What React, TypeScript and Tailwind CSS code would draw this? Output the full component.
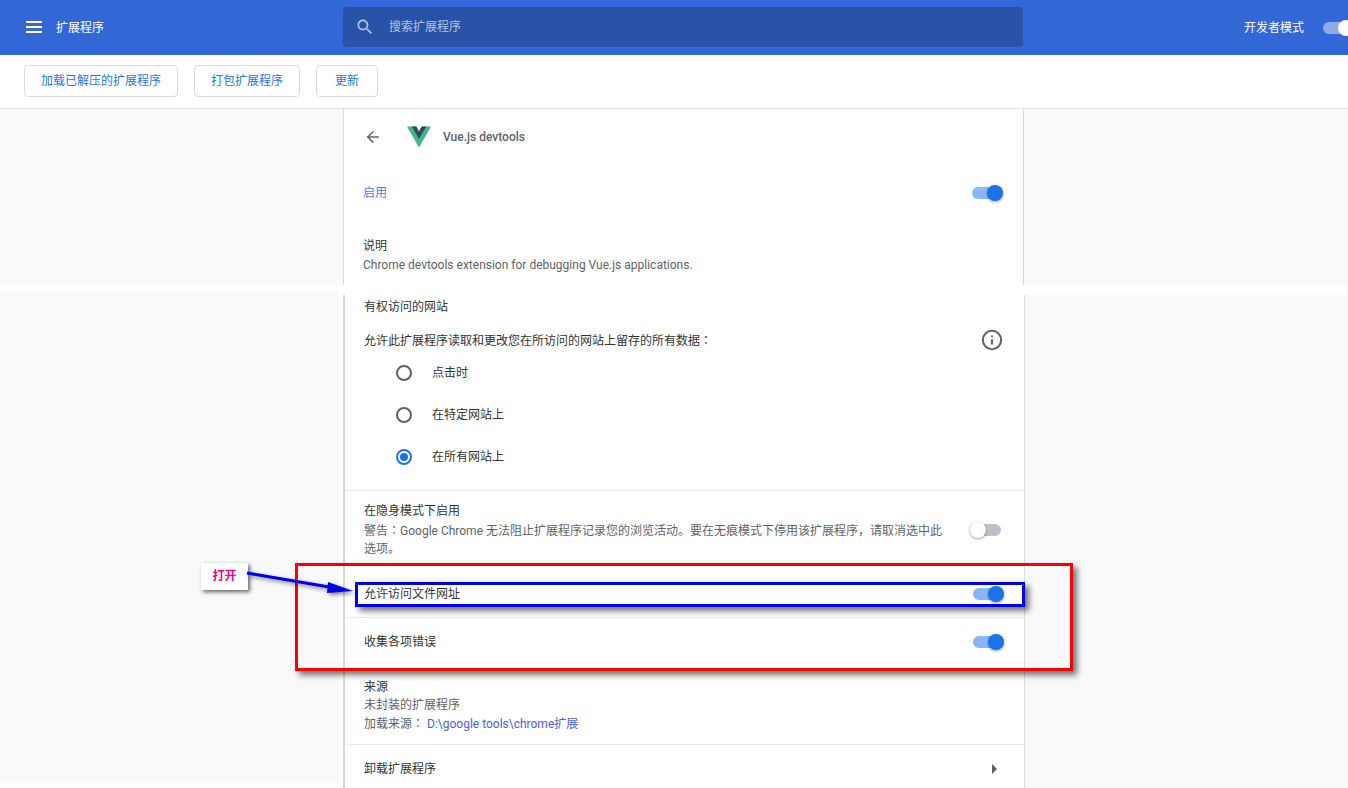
import { ArrowLeft, Info } from "lucide-react"

const cjk = "font-['Roboto','Noto_Sans_CJK_SC',sans-serif]"

function Toggle({ on = true, white = false }: { on?: boolean; white?: boolean }) {
  if (white) {
    return (
      <div className="relative h-3 w-[31px] rounded-full bg-[#8fabe4]">
        <div className="absolute right-0 top-[-2px] h-4 w-4 rounded-full bg-white" />
      </div>
    )
  }
  return (
    <div className={`relative h-3 w-[31px] rounded-full ${on ? "bg-[#8ab8f6]" : "bg-[#bdc1c6]"}`}>
      <div
        className={`absolute top-[-2px] h-4 w-4 rounded-full shadow-[0_1px_3px_rgba(0,0,0,0.4)] ${
          on ? "right-0 bg-[#1a73e8]" : "left-0 bg-white"
        }`}
      />
    </div>
  )
}

function Radio({ label, checked = false }: { label: string; checked?: boolean }) {
  return (
    <div className="flex h-[42px] items-center pl-[51px]">
      <div
        className={`flex h-4 w-4 items-center justify-center rounded-full border-2 ${
          checked ? "border-[#1a73e8]" : "border-[#5f6368]"
        }`}
      >
        {checked && <div className="h-2 w-2 rounded-full bg-[#1a73e8]" />}
      </div>
      <span className="ml-5 text-xs text-[#333]">{label}</span>
    </div>
  )
}

// the full-width colon sits in the middle of its cell in the picture
function Colon() {
  return <span className="font-['Noto_Sans_CJK_TC',sans-serif]">：</span>
}

export default function App() {
  return (
    <div className={`relative h-[788px] w-[1348px] overflow-hidden bg-white ${cjk}`}>
      {/* Header */}
      <header className="flex h-[55px] items-center bg-[#3367d6]">
        <div className="flex w-[343px] items-center pl-[26px]">
          <svg className="mb-px h-3 w-4" viewBox="0 0 16 12" fill="#fff">
            <rect width="16" height="2" />
            <rect y="5" width="16" height="2" />
            <rect y="10" width="16" height="2" />
          </svg>
          <span className="ml-[14px] text-xs text-white">扩展程序</span>
        </div>
        <div className="mb-px flex h-10 w-[680px] items-center rounded-sm bg-[#2a52a6] pl-3">
          <svg className="h-5 w-5" viewBox="0 0 24 24" fill="#b4c3e4">
            <path d="M15.5 14h-.79l-.28-.27C15.41 12.59 16 11.11 16 9.5 16 5.91 13.09 3 9.5 3S3 5.91 3 9.5 5.91 16 9.5 16c1.61 0 3.09-.59 4.23-1.57l.27.28v.79l5 4.99L20.49 19l-4.99-5zm-6 0C7.01 14 5 11.99 5 9.5S7.01 5 9.5 5 14 7.01 14 9.5 11.99 14 9.5 14z" />
          </svg>
          <span className="ml-[14px] text-xs text-[#b4c3e4]">搜索扩展程序</span>
        </div>
        <div className="ml-auto flex items-center gap-[19px]">
          <span className="text-xs text-white">开发者模式</span>
          <div className="w-[25px] overflow-hidden py-1">
            <Toggle white />
          </div>
        </div>
      </header>

      {/* Toolbar */}
      <div className="flex h-[54px] items-center gap-4 border-b border-[#e0e0e0] pb-px pl-6">
        <button className="h-8 w-[154px] rounded border border-[#dadce0] text-xs text-[#2a74e8]">加载已解压的扩展程序</button>
        <button className="h-8 w-[106px] rounded border border-[#dadce0] text-xs text-[#2a74e8]">打包扩展程序</button>
        <button className="h-8 w-[62px] rounded border border-[#dadce0] text-xs text-[#2a74e8]">更新</button>
      </div>

      {/* First part of the page */}
      <div className="flex h-[176px] bg-[#f8f9fa]">
        <div className="w-[343px]" />
        <main className="w-[681px] border-x border-[#d9d9d9] bg-white pl-[19px] pr-5">
          <div className="flex h-[56px] items-center">
            <ArrowLeft className="ml-[1px] h-[18px] w-[18px] text-[#5f6368]" strokeWidth={2} />
            <svg className="ml-[25px] h-[22px] w-6" viewBox="0 0 261.76 226.69">
              <path fill="#41b883" d="M161.096.001l-30.225 52.351L100.647.001H-.005l130.877 226.688L261.749.001z" />
              <path fill="#34495e" d="M161.096.001l-30.225 52.351L100.647.001H52.346l78.526 136.01L209.398.001z" />
            </svg>
            <span className="ml-3 text-xs font-medium text-[#5f6368]">Vue.js devtools</span>
          </div>
          <div className="flex h-[56px] items-center justify-between">
            <span className="text-xs text-[#3f7fef]">启用</span>
            <Toggle />
          </div>
          <div className="pt-4 text-xs leading-[19px]">
            <div className="text-[#333]">说明</div>
            <div className="text-[#5f6368]">Chrome devtools extension for debugging Vue.js applications.</div>
          </div>
        </main>
        <div className="flex-1" />
      </div>

      <div className="flex h-[6px] justify-end">
        <div className="w-[2px] bg-[#f8f9fa]" />
      </div>

      {/* Second part of the page, a screenshot seam sits above it */}
      <div className="flex h-[497px]">
        <div className="h-[492px] w-[339px] bg-[#f8f9fa]" />
        <section className="ml-1 mt-1 w-[682px] border-r border-l-2 border-[#d9d9d9] bg-white">
          <div className="h-[196px] border-b border-[#ebebeb]">
            <div className="pl-[19px] pr-[21px] pt-1 text-xs leading-4 text-[#333]">有权访问的网站</div>
            <div className="flex items-center justify-between pl-[19px] pr-[21px] pt-[14px] text-xs text-[#333]">
              <span>允许此扩展程序读取和更改您在所访问的网站上留存的所有数据<Colon /></span>
              <Info className="h-[22px] w-[22px] text-[#5f6368]" strokeWidth={2.2} />
            </div>
            <div className="pt-px">
              <Radio label="点击时" />
              <Radio label="在特定网站上" />
              <Radio label="在所有网站上" checked />
            </div>
          </div>
          <div className="flex h-[79px] items-center justify-between pl-[19px] pr-[23px]">
            <div className="w-[580px] text-xs leading-[18.5px]">
              <div className="text-[#333]">在隐身模式下启用</div>
              <div className="text-[#5f6368]">
                警告<Colon />Google Chrome 无法阻止扩展程序记录您的浏览活动。要在无痕模式下停用该扩展程序，请取消选中此选项。
              </div>
            </div>
            <div className="mb-0.5">
              <Toggle on={false} />
            </div>
          </div>
          <div className="flex h-[48px] items-center justify-between border-b border-[#ebebeb] pl-[19px] pr-[20px]">
            <span className="text-xs text-[#333]">允许访问文件网址</span>
            <Toggle />
          </div>
          <div className="flex h-[48px] items-center justify-between pl-[19px] pr-[20px]">
            <span className="text-xs text-[#333]">收集各项错误</span>
            <Toggle />
          </div>
          <div className="flex h-[79px] flex-col justify-center border-b border-[#ebebeb] pl-[19px] text-xs leading-[18px] text-[#5f6368]">
            <div className="text-[#333]">来源</div>
            <div>未封装的扩展程序</div>
            <div>
              加载来源<Colon /> <span className="text-[#4a62d8]">D:\google tools\chrome扩展</span>
            </div>
          </div>
          <div className="flex h-[48px] items-center justify-between pl-[19px] pr-[27px] text-xs text-[#333]">
            <span>卸载扩展程序</span>
            <div className="h-0 w-0 border-y-[5px] border-l-[5px] border-y-transparent border-l-[#5f6368]" />
          </div>
        </section>
        <div className="flex flex-1 flex-col">
          <div className="flex h-1 justify-end">
            <div className="w-[2px] bg-[#f8f9fa]" />
          </div>
          <div className="flex-1 bg-[#f8f9fa]" />
        </div>
      </div>

      {/* Annotations drawn over the page */}
      <div className="absolute left-[295px] top-[563px] h-[108px] w-[778px] border-[3px] border-[#ff0000] shadow-[4px_4px_6px_rgba(0,0,0,0.55)]" />
      <div className="absolute left-[355px] top-[582px] h-[25px] w-[670px] border-[3px] border-[#0000e6] shadow-[4px_4px_6px_rgba(0,0,0,0.55)]" />
      <div className="absolute left-[201px] top-[563px] flex h-[27px] w-[47px] items-center justify-center bg-white pb-px text-xs font-bold text-[#ff0080] shadow-[2px_2px_4px_rgba(0,0,0,0.6)]">
        打开
      </div>
      <svg
        className="absolute left-[245px] top-[570px] h-[30px] w-[115px] drop-shadow-[2px_2px_2px_rgba(0,0,0,0.5)]"
        viewBox="0 0 115 30"
      >
        <path d="M2 3 L90 18" stroke="#0000e6" strokeWidth="3" fill="none" />
        <path d="M108 21 L83 12 L82 23 Z" fill="#0000e6" />
      </svg>
    </div>
  )
}
